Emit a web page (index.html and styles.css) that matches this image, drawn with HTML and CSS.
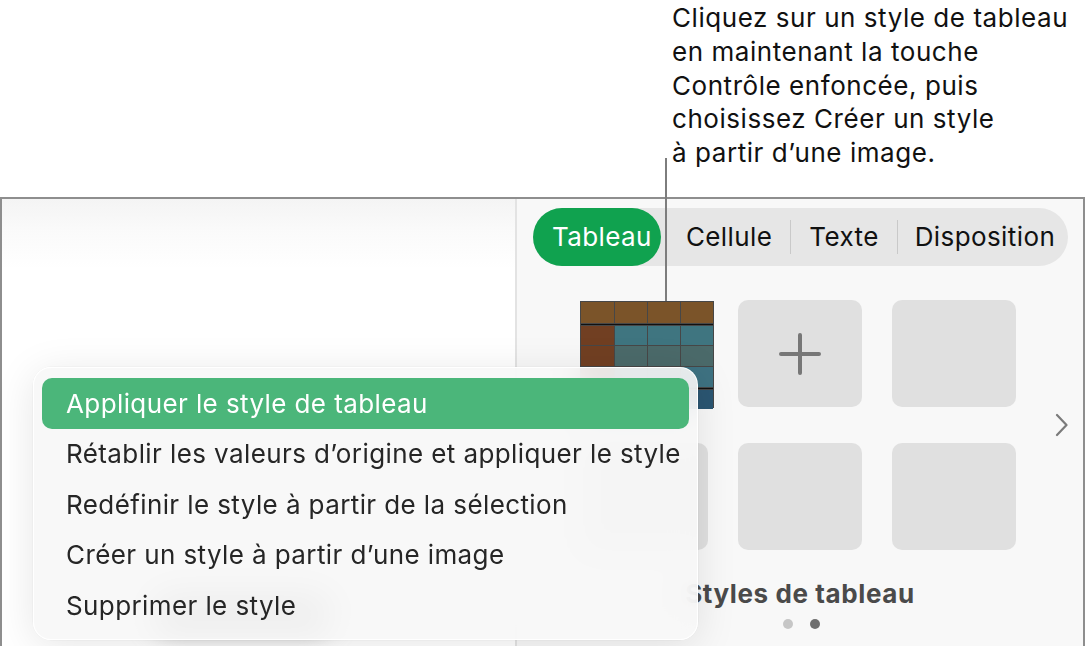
FILE: index.html
```html
<!DOCTYPE html>
<html lang="fr">
<head>
<meta charset="utf-8">
<title>Styles de tableau</title>
<link rel="stylesheet" href="styles.css">
</head>
<body>
<div class="page">
  <div class="callout">
    <p class="callout-text">Cliquez sur un style de tableau<br>en maintenant la touche<br>Contrôle enfoncée, puis<br>choisissez Créer un style<br>à partir d’une image.</p>
  </div>
  <div class="screen">
    <div class="left-pane">
      <div class="ghost"></div>
    </div>
    <div class="divider"></div>
    <div class="right-pane">
      <div class="tabs">
        <div class="tab tab-active">Tableau</div>
        <div class="tab tab-first">Cellule</div>
        <div class="tab-sep"></div>
        <div class="tab">Texte</div>
        <div class="tab-sep"></div>
        <div class="tab tab-last">Disposition</div>
      </div>
      <div class="styles-row">
        <div class="grid">
          <div class="tile tile-table">
            <div class="tbl">
              <div class="c hd"></div><div class="c hd"></div><div class="c hd"></div><div class="c hd"></div>
              <div class="c line"></div>
              <div class="c fc"></div><div class="c r2"></div><div class="c r2"></div><div class="c r2"></div>
              <div class="c fc"></div><div class="c r3"></div><div class="c r3"></div><div class="c r3"></div>
              <div class="c fc"></div><div class="c r4"></div><div class="c r4"></div><div class="c r4"></div>
              <div class="c line"></div>
              <div class="c fc5"></div><div class="c r5"></div><div class="c r5"></div><div class="c r5"></div>
            </div>
          </div>
          <div class="tile tile-add">
            <svg class="plus" width="44" height="44" viewBox="0 0 44 44"><path d="M22 3V41M3 22H41" stroke="#777" stroke-width="4" stroke-linecap="round" fill="none"/></svg>
          </div>
          <div class="tile"></div>
          <div class="tile"></div>
          <div class="tile"></div>
          <div class="tile"></div>
        </div>
        <svg class="chevron" width="13" height="24" viewBox="0 0 13 24"><path d="M2 2L11.5 12L2 22" stroke="#7b7b7b" stroke-width="2.2" stroke-linecap="round" stroke-linejoin="round" fill="none"/></svg>
      </div>
      <div class="title">Styles de tableau</div>
      <div class="dots"><span class="dot"></span><span class="dot dot-on"></span></div>
    </div>
    <div class="menu">
      <div class="menu-item menu-active">Appliquer le style de tableau</div>
      <div class="menu-item">Rétablir les valeurs d’origine et appliquer le style</div>
      <div class="menu-item">Redéfinir le style à partir de la sélection</div>
      <div class="menu-item">Créer un style à partir d’une image</div>
      <div class="menu-item">Supprimer le style</div>
    </div>
  </div>
  <div class="leader"></div>
</div>
</body>
</html>
```
FILE: styles.css
```css
html, body {
  margin: 0;
  padding: 0;
}
body {
  width: 1085px;
  height: 646px;
  overflow: hidden;
  background: #ffffff;
  font-family: Inter, "Noto Sans", "DejaVu Sans", sans-serif;
  color: #111;
}
.page {
  position: relative;
  width: 1085px;
  height: 646px;
}
.callout {
  height: 197px;
  box-sizing: border-box;
  padding: 1px 0 0 672px;
  font-size: 26px;
  line-height: 33.8px;
  letter-spacing: 0.55px;
  color: #111;
}
.callout-text {
  margin: 0;
}
.leader {
  position: absolute;
  left: 665px;
  top: 158px;
  width: 2px;
  height: 143px;
  background: #7d7d7d;
}
.screen {
  position: relative;
  height: 449px;
  box-sizing: border-box;
  border: 2px solid #8e8e8e;
  border-bottom: none;
  display: flex;
}
.left-pane {
  flex: none;
  width: 513px;
  display: flex;
  flex-direction: column;
  background: linear-gradient(to bottom, #f4f4f4 0px, #fafafa 30px, #ffffff 70px, #ffffff 100%);
}
.ghost {
  margin-top: auto;
  margin-bottom: 16px;
  margin-left: 150px;
  width: 180px;
  height: 36px;
  border-radius: 18px;
  background: #8c8c8c;
  filter: blur(12px);
}
.divider {
  flex: none;
  width: 2px;
  background: #e3e3e3;
}
.right-pane {
  flex: 1;
  min-width: 0;
  background: #f8f8f8;
  padding: 9px 15px 0 16px;
  display: flex;
  flex-direction: column;
}
.tabs {
  height: 58px;
  border-radius: 29px;
  background: #e6e6e6;
  display: flex;
  align-items: center;
  font-size: 26px;
  letter-spacing: 0.4px;
  color: #111;
}
.tab {
  flex: none;
  padding: 0 18px;
  line-height: 58px;
}
.tab-active {
  background: #10a24f;
  color: #fff;
  border-radius: 29px;
  padding: 0 9px 0 19px;
}
.tab-first {
  padding-left: 25px;
}
.tab-last {
  padding-left: 17px;
  padding-right: 0;
}
.tab-sep {
  flex: none;
  width: 1px;
  height: 34px;
  background: #c9c9c9;
}
.styles-row {
  margin-top: 34px;
  padding-left: 51px;
  display: flex;
  align-items: center;
}
.grid {
  flex: none;
  display: grid;
  grid-template-columns: repeat(3, 124px);
  grid-auto-rows: 107px;
  column-gap: 30px;
  row-gap: 36px;
}
.tile {
  background: #e0e0e0;
  border-radius: 10px;
}
.tile-table {
  background: transparent;
  padding-top: 1px;
}
.tile-add {
  display: flex;
  align-items: center;
  justify-content: center;
}
.tbl {
  margin-left: -4px;
  width: 134px;
  height: 107px;
  box-sizing: border-box;
  padding: 1px;
  background: #474747;
  display: grid;
  grid-template-columns: 33px 32px 32px 32px;
  grid-template-rows: 21px 1px 19px 20px 20px 1px 19px;
  gap: 1px;
}
.c.hd { background: #7b5429; }
.c.line { grid-column: 1 / -1; background: #111; }
.c.fc { background: #713f22; }
.c.fc5 { background: #2a4f68; }
.c.r2 { background: #3f7580; }
.c.r3 { background: #4b6a6a; }
.c.r4 { background: #3e7282; }
.c.r5 { background: #2b5672; }
.chevron {
  flex: none;
  margin-left: 39px;
}
.title {
  width: 432px;
  margin-left: 51px;
  margin-top: 30px;
  text-align: center;
  font-size: 26px;
  line-height: 28px;
  font-weight: 700;
  letter-spacing: 0.6px;
  color: #4a4a4a;
  white-space: nowrap;
}
.dots {
  width: 432px;
  margin-left: 52px;
  margin-top: 11px;
  display: flex;
  justify-content: center;
  gap: 17px;
}
.dot {
  width: 10px;
  height: 10px;
  border-radius: 50%;
  background: #c6c6c6;
}
.dot-on {
  background: #6f6f6f;
}
.menu {
  position: absolute;
  left: 31px;
  top: 168px;
  width: 665px;
  height: 273px;
  box-sizing: border-box;
  padding: 10px 8px 10px 8px;
  border-radius: 18px;
  border: 1px solid rgba(255, 255, 255, 0.95);
  background: rgba(247, 247, 247, 0.9);
  backdrop-filter: blur(14px);
  box-shadow: 0 6px 40px rgba(0, 0, 0, 0.10), 0 0 0 0.5px rgba(0, 0, 0, 0.05);
}
.menu-item {
  height: 50.5px;
  display: flex;
  align-items: center;
  padding-left: 24px;
  border-radius: 10px;
  font-size: 26px;
  letter-spacing: 0.4px;
  color: #262626;
  white-space: nowrap;
}
.menu-active {
  background: #4bb67a;
  color: #fff;
}
```
